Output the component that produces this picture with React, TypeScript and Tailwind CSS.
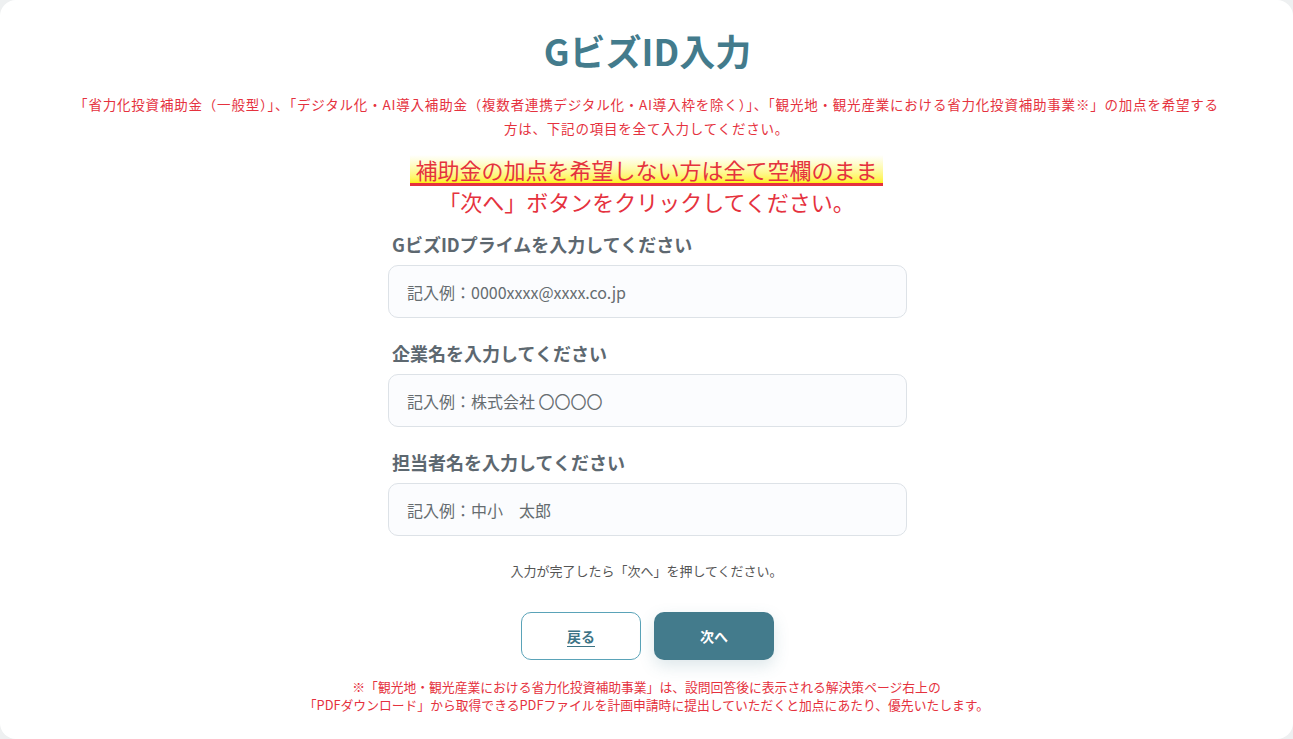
import React, { useState } from "react";

const FONT = "font-['Noto_Sans_CJK_JP','Noto_Sans',sans-serif]";

interface FieldProps {
  label: string;
  placeholder: string;
  value: string;
  onChange: (v: string) => void;
}

function Field({ label, placeholder, value, onChange }: FieldProps) {
  return (
    <div className="flex flex-col">
      <label className="pl-1 text-[18px] leading-[26px] font-bold text-[#5d6870]">{label}</label>
      <input
        type="text"
        value={value}
        onChange={(e) => onChange(e.target.value)}
        placeholder={placeholder}
        className="mt-2 h-[53px] w-full rounded-[10px] border border-[#dde2e7] bg-[#fbfcfe] px-[18px] text-[16px] text-[#333] outline-none placeholder:text-[#666c70] focus:border-[#5aa3b8]"
      />
    </div>
  );
}

export default function App() {
  const [gbiz, setGbiz] = useState("");
  const [company, setCompany] = useState("");
  const [person, setPerson] = useState("");

  return (
    <div className={`h-[739px] w-full bg-[#eef0f1] ${FONT}`}>
      <div className="flex h-full flex-col items-center rounded-2xl bg-white pt-6">
        {/* Title */}
        <h1 className="pl-[2px] text-[36px] leading-[52px] font-bold text-[#437b8c]">GビズID入力</h1>

        {/* Notice */}
        <p className="mt-4 text-center text-[13.5px] leading-[24px] tracking-[0.8px] text-[#e5323e]">
          「省力化投資補助金（一般型）」、「デジタル化・AI導入補助金（複数者連携デジタル化・AI導入枠を除く）」、「観光地・観光産業における省力化投資補助事業※」の加点を希望する
          <br />
          方は、下記の項目を全て入力してください。
        </p>

        <div className="mt-[15px] flex flex-col items-center">
          <span className="border-b-[3px] border-[#e5323e] bg-linear-to-b from-white to-[#fff200] px-[5px] text-[22px] leading-[28px] text-[#e5323e]">
            補助金の加点を希望しない方は全て空欄のまま
          </span>
          <span className="text-[22px] leading-[30px] text-[#e5323e]">「次へ」ボタンをクリックしてください。</span>
        </div>

        {/* Form */}
        <div className="mt-[15px] ml-[2px] flex w-[519px] flex-col gap-[22px]">
          <Field
            label="GビズIDプライムを入力してください"
            placeholder="記入例：0000xxxx@xxxx.co.jp"
            value={gbiz}
            onChange={setGbiz}
          />
          <Field label="企業名を入力してください" placeholder="記入例：株式会社 〇〇〇〇" value={company} onChange={setCompany} />
          <Field label="担当者名を入力してください" placeholder="記入例：中小　太郎" value={person} onChange={setPerson} />
        </div>

        <p className="mt-[26px] text-[13px] leading-[18px] text-[#555]">入力が完了したら「次へ」を押してください。</p>

        {/* Buttons */}
        <div className="mt-[32px] flex gap-[13px] pl-[2px]">
          <button
            type="button"
            className="h-12 w-[120px] rounded-[10px] border border-[#5aa3b8] bg-white text-[14px] font-bold text-[#3d7486] underline underline-offset-4"
          >
            戻る
          </button>
          <button
            type="button"
            className="h-12 w-[120px] rounded-[10px] bg-[#437b8c] text-[14px] font-bold text-white shadow-[0_6px_16px_rgba(67,123,140,0.18)]"
          >
            次へ
          </button>
        </div>

        {/* Footnote */}
        <p className="mt-[18px] text-center text-[12.8px] leading-[18px] text-[#e5323e]">
          ※「観光地・観光産業における省力化投資補助事業」は、設問回答後に表示される解決策ページ右上の
          <br />
          「PDFダウンロード」から取得できるPDFファイルを計画申請時に提出していただくと加点にあたり、優先いたします。
        </p>
      </div>
    </div>
  );
}
